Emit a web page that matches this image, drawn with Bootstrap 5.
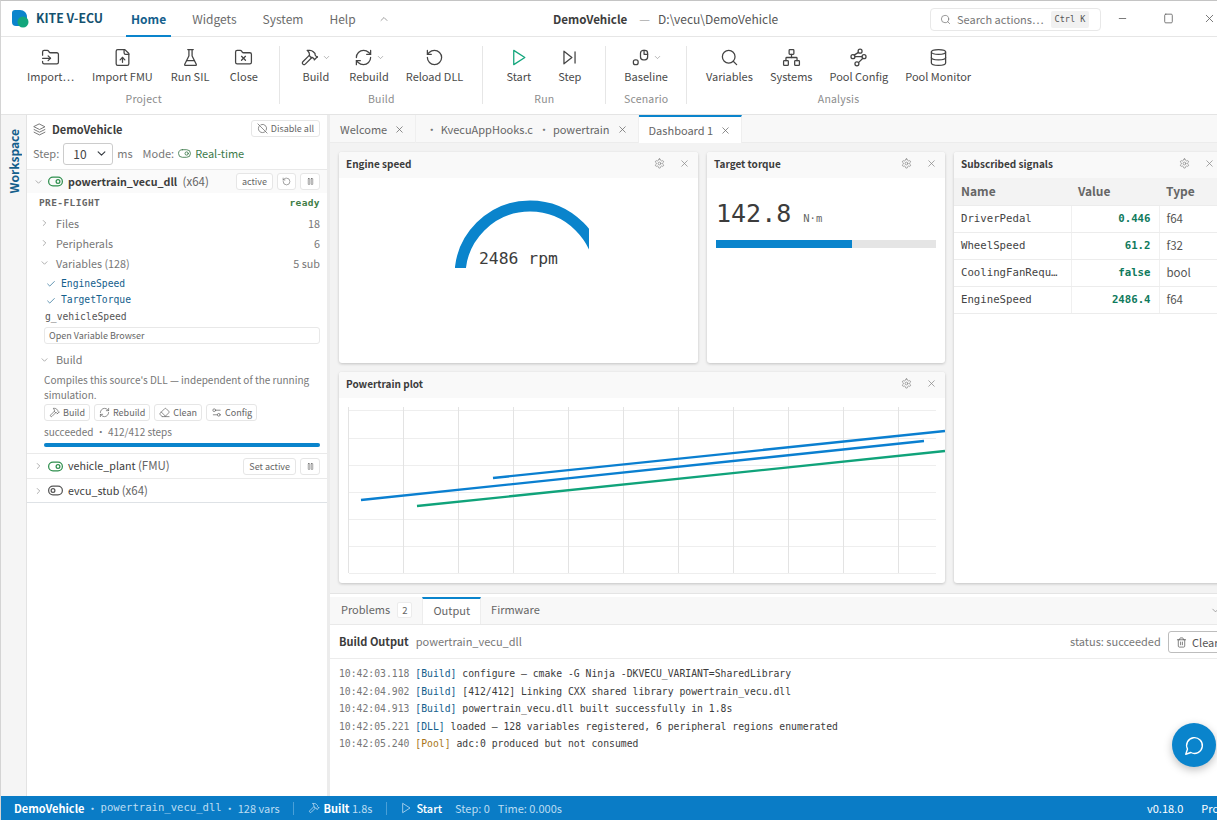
<!DOCTYPE html>
<html lang="en">
<head>
    <meta charset="UTF-8">
    <title>KITE V-ECU</title>
    <link href="https://cdn.jsdelivr.net/npm/bootstrap@5.3.0/dist/css/bootstrap.min.css" rel="stylesheet">
    <style>
        body { margin: 0; height: 820px; overflow: hidden; font-family: "Noto Sans CJK SC", "Noto Sans", sans-serif; font-size: 11px; color: #3c3c3c; background: #fff; }
        .mono { font-family: "DejaVu Sans Mono", monospace; }
        .ico { width: 1em; height: 1em; fill: none; stroke: currentColor; stroke-width: 1.6; stroke-linecap: round; stroke-linejoin: round; flex: none; }

        .app-shell { height: 820px; width: 1217px; border-top: 1px solid #c4c4c4; border-left: 1px solid #d4d4d4; overflow: hidden; }

        .title-row { height: 36px; flex: none; border-bottom: 1px solid #e6e6e6; position: relative; }
        .logo-mark { width: 18px; height: 18px; margin-left: 10px; flex: none; }
        .brand-name { font-size: 12.3px; font-weight: 600; color: #14516f; margin-left: 7px; width: 90px; }
        .menu-tab { font-size: 12px; color: #6b6b6b; padding: 0 5px; margin-right: 16px; height: 36px; line-height: 35px; }
        .menu-tab.on { color: #14608c; font-weight: 600; border-bottom: 2px solid #0a84cc; }
        .win-title { position: absolute; left: 552px; top: 0; line-height: 35px; font-size: 12px; color: #555; }
        .win-title b { color: #3c3c3c; font-weight: 600; font-size: 11.6px; }
        .title-dash { color: #aaa; margin: 0 8px 0 12px; }
        .search-box { position: absolute; left: 929px; top: 7px; width: 171px; height: 23px; border: 1px solid #e8e8e8; border-radius: 4px; font-size: 11px; color: #777; padding-left: 9px; gap: 6px; white-space: nowrap; }
        .kbd-chip { font-size: 8.5px; background: #f1f1f1; border-radius: 2px; padding: 2px 4px; margin-left: 1px; color: #555; }
        .win-btn { position: absolute; top: 11px; font-size: 13px; color: #666; }

        .ribbon-row { height: 78px; flex: none; border-bottom: 1px solid #e4e4e4; padding-left: 19px; }
        .rib-group { display: flex; flex-direction: column; align-items: center; padding-top: 8px; }
        .rib-items { display: flex; gap: 4px; }
        .rib-items.tight { gap: 3px; }
        .rib-item { min-width: 47px; padding: 0 7px; text-align: center; font-size: 11px; color: #4a4a4a; white-space: nowrap; }
        .rib-item.slim { padding: 0 6px; }
        .rib-icon { height: 24px; margin-bottom: -1px; display: flex; align-items: center; justify-content: center; gap: 3px; font-size: 19px; color: #444; }
        .rib-icon .caret-small { font-size: 9px; color: #888; }
        .rib-cap { font-size: 10.5px; color: #8c8c8c; margin-top: 6px; letter-spacing: .2px; }
        .rib-sep { width: 1px; height: 58px; background: #e6e6e6; margin: 9px 12px 0; }

        .work-row { flex: 1; min-height: 0; }
        .side-rail { width: 26px; flex: none; background: #f5f5f5; border-right: 1px solid #e3e3e3; }
        .rail-label { writing-mode: vertical-rl; transform: rotate(180deg); font-size: 12px; font-weight: 600; color: #14608c; margin: 14px 0 0 4px; }

        .side-pane { width: 300px; flex: none; overflow: hidden; border-right: 3px solid #ececec; box-sizing: content-box; }
        .pane-head { height: 28px; padding: 5px 7px 0 6px; }
        .pane-name { font-size: 11px; font-weight: 600; color: #3c3c3c; margin-left: 6px; line-height: 19px; }
        .mini-btn { font-size: 9px; line-height: 1; color: #666; background: #fff; border: 1px solid #e6e6e6; border-radius: 3px; height: 17px; padding: 0 5px; display: inline-flex; align-items: center; gap: 3px; white-space: nowrap; }
        .step-row { height: 27px; padding-left: 6px; font-size: 11px; color: #777; border-bottom: 1px solid #e9e9e9; padding-bottom: 5px; }
        .step-select { width: 50px; height: 22px; min-height: 22px; font-size: 12px; padding: 0 0 0 9px; margin: 0 4px 0 4px; background-position: right 5px center; background-size: 11px 9px; border-color: #ccc; border-radius: 3px; color: #444; }
        .mode-label { margin-left: 10px; }
        .real-time { color: #3c7a4a; }
        .source-row { height: 23px; padding: 0 7px 0 6px; background: #fafafa; }
        .source-row.plain { background: #fff; height: 25px; border-top: 1px solid #eaeaea; padding-top: 1px; }
        .chev { font-size: 10px; color: #888; width: 11px; margin-right: 4px; }
        .toggle-on { font-size: 15px; color: #2f8f4e; stroke-width: 2; }
        .toggle-off { font-size: 15px; color: #555; stroke-width: 2; }
        .src-name { font-size: 10.7px; color: #3c3c3c; margin-left: 5px; }
        .src-name small { font-size: 11.500px; color: #666; }
        .src-bold { font-weight: 600; margin-right: 3px; }
        .preflight { height: 20px; padding: 0 7px 0 12px; font-size: 9.5px; font-weight: 700; color: #666; letter-spacing: .4px; }
        .preflight .ok-txt { color: #3f7d46; }
        .tree-row { height: 20px; padding: 0 7px 0 12px; color: #777; font-size: 10.8px; }
        .tree-row .chev { margin-right: 6px; }
        .var-list { padding-top: 3px; }
        .var-row { height: 16.5px; padding-left: 19px; font-size: 9.7px; color: #14608c; gap: 5px; }
        .var-row .ico { font-size: 10px; color: #14608c; }
        .var-plain { color: #555; padding-left: 18px; }
        .wide-btn { margin: 1px 7px 0 17px; height: 17px; border: 1px solid #e8e8e8; border-radius: 3px; font-size: 9px; color: #666; padding: 0 4px; line-height: 15px; }
        .build-head { margin-top: 6px; }
        .build-text { padding: 2px 7px 0 17px; font-size: 10px; line-height: 15px; color: #777; }
        .build-btns { padding-left: 17px; gap: 4px; margin-top: 2px; }
        .build-btns .mini-btn { padding: 0 4px; }
        .step-state { padding-left: 17px; height: 20px; font-size: 10px; color: #777; margin-top: 1px; white-space: pre; }
        .build-bar { height: 4px; margin: 1px 7px 6px 17px; background: #e5e5e5; }
        .build-bar .progress-bar { background: #0a84cc; }

        .main-pane { flex: 1; min-width: 0; overflow: hidden; }
        .doc-tabs { height: 28px; flex: none; background: #f8f8f8; border-bottom: 1px solid #ececec; font-size: 11px; color: #666; }
        .doc-tab { height: 28px; padding: 0 10px; gap: 7px; border-right: 1px solid #efefef; white-space: nowrap; }
        .doc-tab.on { background: #fff; border-top: 2px solid #0a84cc; }
        .doc-tab .ico { font-size: 11px; }
        .doc-dot { color: #777; margin: 0 1px 0 3px; }
        .doc-dot.first { margin-left: 0; }

        .dash-area { height: 451px; flex: none; background: #f3f3f3; padding: 9px 0 0 9px; overflow: hidden; border-bottom: 1px solid #e4e4e4; display: grid; grid-template-columns: 359px 238px 269px; grid-template-rows: 211px 211px; gap: 9px; width: 887px; }
        .widget-box { background: #fff; border-radius: 3px; box-shadow: 0 1px 3px rgba(0,0,0,.2); overflow: hidden; }
        .widget-head { height: 26px; background: #f9f9f9; padding: 0 8px 3px 7px; font-size: 10px; font-weight: 600; color: #3c3c3c; gap: 14px; }
        .widget-head .ico { font-size: 11px; color: #888; }
        .gauge-wrap { position: relative; margin: 22px 0 0 116px; width: 134px; height: 68px; }
        .gauge-wrap svg { display: block; }
        .gauge-val { position: absolute; left: 24px; top: 48px; font-size: 16.4px; line-height: 22px; color: #3c3c3c; white-space: nowrap; }
        .torque-val { font-size: 25px; line-height: 30px; color: #3c3c3c; margin: 21px 0 0 9px; }
        .torque-val span { font-size: 10.5px; margin-left: 12px; color: #666; }
        .torque-bar { height: 8px; margin: 7px 9px 0; background: #e5e5e5; border-radius: 0; }
        .torque-bar .progress-bar { background: #0a84cc; }

        .sig-table { width: 269px; table-layout: fixed; margin: 0; font-size: 10.7px; }
        .sig-table th { background: #f3f3f3; height: 27px; font-size: 12px; font-weight: 600; color: #666; padding: 0 7px; border-bottom: 1px solid #ececec; vertical-align: middle; }
        .sig-table td { height: 27px; padding: 1px 7px 0; color: #444; border-bottom: 1px solid #ececec; border-right: 1px solid #f0f0f0; vertical-align: middle; overflow: hidden; white-space: nowrap; }
        .sig-table td.num { text-align: right; font-weight: 700; color: #0f7a5c; padding-right: 8px; }
        .sig-table td.kind { font-size: 11.5px; font-family: "Noto Sans CJK SC", sans-serif; color: #555; border-right: 0; }
        .plot-svg { display: block; }

        .bottom-pane { flex: 1; min-height: 0; position: relative; }
        .bottom-gap { height: 3px; }
        .panel-tabs { height: 28px; flex: none; background: #f8f8f8; border-bottom: 1px solid #e9e9e9; font-size: 11px; color: #666; padding-left: 1px; }
        .panel-tab { height: 27px; padding: 0 10px 2px; gap: 7px; }
        .panel-tab.on { background: #fff; border-top: 2px solid #0a84cc; border-right: 1px solid #ededed; border-left: 1px solid #ededed; padding-bottom: 2px; }
        .count-chip { font-size: 9.5px; background: #fff; border: 1px solid #ececec; border-radius: 2px; padding: 0 4px; line-height: 14px; }
        .panel-head { height: 34px; flex: none; border-bottom: 1px solid #ececec; padding: 0 0 0 9px; font-size: 11px; color: #777; position: relative; }
        .panel-head b { font-weight: 600; color: #3c3c3c; margin-right: 7px; }
        .clear-btn { position: absolute; left: 838px; top: 6px; width: 70px; height: 22px; border: 1px solid #bdbdbd; border-radius: 3px; font-size: 11px; color: #555; padding-left: 7px; gap: 5px; }
        .status-txt { position: absolute; left: 740px; top: 8px; }
        .log-box { padding: 6px 0 0 9px; font-size: 9.75px; line-height: 17.5px; color: #3c3c3c; white-space: pre; }
        .log-time { color: #777; }
        .log-build { color: #14608c; }
        .log-pool { color: #a8761a; }
        .chat-fab { position: absolute; left: 842px; top: 129px; width: 44px; height: 44px; border-radius: 50%; background: #0a84cc; color: #fff; font-size: 21px; box-shadow: 0 3px 8px rgba(0,0,0,.25); }

        .status-bar { height: 24px; flex: none; background: #0a7cc6; color: #bcdcf2; font-size: 11px; padding-left: 13px; position: relative; white-space: nowrap; }
        .status-bar b { color: #fff; font-weight: 600; }
        .status-dot { margin: 0 2.5px; }
        .status-sep { width: 1px; height: 13px; background: #4aa0d8; margin: 0 13.5px; }
        .status-step { margin-left: 13px; }
        .status-right { position: absolute; left: 1146px; top: 4px; color: #fff; gap: 18px; }
    </style>
</head>
<body>

<svg width="0" height="0" class="position-absolute">
    <symbol id="i-folder-in" viewBox="0 0 24 24"><path d="M2 9V5a2 2 0 0 1 2-2h3.9a2 2 0 0 1 1.69.9l.81 1.2a2 2 0 0 0 1.67.9H20a2 2 0 0 1 2 2v10a2 2 0 0 1-2 2H4a2 2 0 0 1-2-2v-1"/><path d="M2 13h10"/><path d="m9 16 3-3-3-3"/></symbol>
    <symbol id="i-file-up" viewBox="0 0 24 24"><path d="M15 2H6a2 2 0 0 0-2 2v16a2 2 0 0 0 2 2h12a2 2 0 0 0 2-2V7Z"/><path d="M14 2v4a2 2 0 0 0 2 2h4"/><path d="M12 12v6"/><path d="m15 15-3-3-3 3"/></symbol>
    <symbol id="i-flask" viewBox="0 0 24 24"><path d="M10 2v7.527a2 2 0 0 1-.211.896L4.72 20.55a1 1 0 0 0 .9 1.45h12.76a1 1 0 0 0 .9-1.45l-5.069-10.127A2 2 0 0 1 14 9.527V2"/><path d="M8.5 2h7"/><path d="M7 16h10"/></symbol>
    <symbol id="i-folder-x" viewBox="0 0 24 24"><path d="M20 20a2 2 0 0 0 2-2V8a2 2 0 0 0-2-2h-7.9a2 2 0 0 1-1.69-.9L9.6 3.9A2 2 0 0 0 7.93 3H4a2 2 0 0 0-2 2v13a2 2 0 0 0 2 2Z"/><path d="m9.5 10.5 5 5"/><path d="m14.5 10.5-5 5"/></symbol>
    <symbol id="i-hammer" viewBox="0 0 24 24"><path d="m15 12-8.373 8.373a1 1 0 1 1-3-3L12 9"/><path d="m18 15 4-4"/><path d="m21.5 11.5-1.914-1.914A2 2 0 0 1 19 8.172V7l-2.26-2.26a6 6 0 0 0-4.202-1.756L9 2.96l.92.82A6.18 6.18 0 0 1 12 8.4V10l2 2h1.172a2 2 0 0 1 1.414.586L18.5 14.5"/></symbol>
    <symbol id="i-refresh" viewBox="0 0 24 24"><path d="M3 12a9 9 0 0 1 9-9 9.75 9.75 0 0 1 6.74 2.74L21 8"/><path d="M21 3v5h-5"/><path d="M21 12a9 9 0 0 1-9 9 9.75 9.75 0 0 1-6.74-2.74L3 16"/><path d="M8 16H3v5"/></symbol>
    <symbol id="i-rotate" viewBox="0 0 24 24"><path d="M3 12a9 9 0 1 0 9-9 9.75 9.75 0 0 0-6.74 2.74L3 8"/><path d="M3 3v5h5"/></symbol>
    <symbol id="i-play" viewBox="0 0 24 24"><path d="M6 3l14 9-14 9z"/></symbol>
    <symbol id="i-step" viewBox="0 0 24 24"><path d="M5 4l10 8-10 8z"/><path d="M19 5v14"/></symbol>
    <symbol id="i-baseline" viewBox="0 0 24 24"><rect x="3" y="15" width="6" height="6" rx="2.5"/><rect x="12" y="3" width="9" height="12" rx="3.5"/><path d="M16.5 3v5h4.5"/></symbol>
    <symbol id="i-search" viewBox="0 0 24 24"><circle cx="11" cy="11" r="8"/><path d="m21 21-4.3-4.3"/></symbol>
    <symbol id="i-network" viewBox="0 0 24 24"><rect x="16" y="16" width="6" height="6" rx="1"/><rect x="2" y="16" width="6" height="6" rx="1"/><rect x="9" y="2" width="6" height="6" rx="1"/><path d="M5 16v-3a1 1 0 0 1 1-1h12a1 1 0 0 1 1 1v3"/><path d="M12 12V8"/></symbol>
    <symbol id="i-pool" viewBox="0 0 24 24"><circle cx="14" cy="4" r="2.5"/><circle cx="5" cy="11" r="2.5"/><circle cx="19" cy="11" r="2.5"/><circle cx="10" cy="20" r="2.5"/><path d="M12 5.5 6.500 9M7.500 11h9M17.500 13l-5.500 5.500"/></symbol>
    <symbol id="i-db" viewBox="0 0 24 24"><ellipse cx="12" cy="5" rx="9" ry="3"/><path d="M3 5V19A9 3 0 0 0 21 19V5"/><path d="M3 12A9 3 0 0 0 21 12"/></symbol>
    <symbol id="i-layers" viewBox="0 0 24 24"><path d="m12 2 10 5-10 5L2 7z"/><path d="m2 12 10 5 10-5"/><path d="m2 17 10 5 10-5"/></symbol>
    <symbol id="i-on" viewBox="0 0 24 24"><rect x="1" y="5" width="22" height="14" rx="7"/><circle cx="16" cy="12" r="3"/></symbol>
    <symbol id="i-off" viewBox="0 0 24 24"><rect x="1" y="5" width="22" height="14" rx="7"/><circle cx="8" cy="12" r="3"/></symbol>
    <symbol id="i-noslash" viewBox="0 0 24 24"><path d="M8.500 3.700A9 9 0 0 1 20.300 15.500"/><path d="M5.600 5.600A9 9 0 0 0 18.400 18.400"/><path d="m2 2 20 20"/></symbol>
    <symbol id="i-pause" viewBox="0 0 24 24"><rect x="6" y="4" width="4" height="16" rx="1"/><rect x="14" y="4" width="4" height="16" rx="1"/></symbol>
    <symbol id="i-eraser" viewBox="0 0 24 24"><path d="m7 21-4.300-4.300c-1-1-1-2.500 0-3.400l9.600-9.600c1-1 2.500-1 3.400 0l5.600 5.600c1 1 1 2.500 0 3.400L13 21"/><path d="M22 21H7"/><path d="m5 11 9 9"/></symbol>
    <symbol id="i-sliders" viewBox="0 0 24 24"><path d="M20 7h-9"/><path d="M14 17H5"/><circle cx="17" cy="17" r="3"/><circle cx="7" cy="7" r="3"/></symbol>
    <symbol id="i-gear" viewBox="0 0 24 24"><path d="M12.220 2h-.44a2 2 0 0 0-2 2v.18a2 2 0 0 1-1 1.730l-.43.25a2 2 0 0 1-2 0l-.15-.08a2 2 0 0 0-2.730.73l-.22.38a2 2 0 0 0 .73 2.730l.15.1a2 2 0 0 1 1 1.720v.51a2 2 0 0 1-1 1.740l-.15.09a2 2 0 0 0-.73 2.730l.22.38a2 2 0 0 0 2.730.73l.15-.08a2 2 0 0 1 2 0l.43.25a2 2 0 0 1 1 1.730V20a2 2 0 0 0 2 2h.44a2 2 0 0 0 2-2v-.18a2 2 0 0 1 1-1.730l.43-.25a2 2 0 0 1 2 0l.15.08a2 2 0 0 0 2.730-.73l.22-.39a2 2 0 0 0-.73-2.730l-.15-.08a2 2 0 0 1-1-1.740v-.5a2 2 0 0 1 1-1.740l.15-.09a2 2 0 0 0 .73-2.730l-.22-.38a2 2 0 0 0-2.730-.73l-.15.08a2 2 0 0 1-2 0l-.43-.25a2 2 0 0 1-1-1.730V4a2 2 0 0 0-2-2z"/><circle cx="12" cy="12" r="3"/></symbol>
    <symbol id="i-x" viewBox="0 0 24 24"><path d="M18 6 6 18"/><path d="m6 6 12 12"/></symbol>
    <symbol id="i-right" viewBox="0 0 24 24"><path d="m9 18 6-6-6-6"/></symbol>
    <symbol id="i-down" viewBox="0 0 24 24"><path d="m6 9 6 6 6-6"/></symbol>
    <symbol id="i-up" viewBox="0 0 24 24"><path d="m18 15-6-6-6 6"/></symbol>
    <symbol id="i-check" viewBox="0 0 24 24"><path d="M20 6 9 17l-5-5"/></symbol>
    <symbol id="i-trash" viewBox="0 0 24 24"><path d="M3 6h18"/><path d="M19 6v14c0 1-1 2-2 2H7c-1 0-2-1-2-2V6"/><path d="M8 6V4c0-1 1-2 2-2h4c1 0 2 1 2 2v2"/><path d="M10 11v6"/><path d="M14 11v6"/></symbol>
    <symbol id="i-chat" viewBox="0 0 24 24"><path d="M7.900 20A9 9 0 1 0 4 16.100L2 22Z"/></symbol>
</svg>

<div class="app-shell d-flex flex-column">

    <!-- Title bar -->
    <div class="title-row d-flex align-items-center">
        <svg class="logo-mark" viewBox="0 0 18 18"><path d="M1 3a3 3 0 0 1 3-3h5c4 0 7 3 7 7v4a5 5 0 0 1-5 5H5a4 4 0 0 1-4-4z" fill="#0a84cc"/><circle cx="12" cy="12" r="5.500" fill="#12a67c"/></svg>
        <div class="brand-name">KITE V-ECU</div>
        <div class="menu-tab on">Home</div>
        <div class="menu-tab">Widgets</div>
        <div class="menu-tab">System</div>
        <div class="menu-tab">Help</div>
        <svg class="ico" style="font-size:12px;color:#888;margin-left:1px"><use href="#i-up"/></svg>
        <div class="win-title"><b>DemoVehicle</b><span class="title-dash">—</span>D:\vecu\DemoVehicle</div>
        <div class="search-box d-flex align-items-center">
            <svg class="ico"><use href="#i-search"/></svg>
            <span>Search actions⋯</span>
            <span class="kbd-chip mono">Ctrl K</span>
        </div>
        <svg class="ico win-btn" style="left:1115px" viewBox="0 0 24 24"><path d="M6 12h12"/></svg>
        <svg class="ico win-btn" style="left:1161px" viewBox="0 0 24 24"><rect x="5" y="4" width="14" height="16" rx="2"/></svg>
        <svg class="ico win-btn" style="left:1202px"><use href="#i-x"/></svg>
    </div>

    <!-- Ribbon -->
    <div class="ribbon-row d-flex">
        <div class="rib-group">
            <div class="rib-items">
                <div class="rib-item"><div class="rib-icon"><svg class="ico"><use href="#i-folder-in"/></svg></div>Import⋯</div>
                <div class="rib-item"><div class="rib-icon"><svg class="ico"><use href="#i-file-up"/></svg></div>Import FMU</div>
                <div class="rib-item"><div class="rib-icon"><svg class="ico"><use href="#i-flask"/></svg></div>Run SIL</div>
                <div class="rib-item"><div class="rib-icon"><svg class="ico"><use href="#i-folder-x"/></svg></div>Close</div>
            </div>
            <div class="rib-cap">Project</div>
        </div>
        <div class="rib-sep"></div>
        <div class="rib-group">
            <div class="rib-items tight">
                <div class="rib-item"><div class="rib-icon"><svg class="ico"><use href="#i-hammer"/></svg><svg class="ico caret-small"><use href="#i-down"/></svg></div>Build</div>
                <div class="rib-item"><div class="rib-icon"><svg class="ico"><use href="#i-refresh"/></svg><svg class="ico caret-small"><use href="#i-down"/></svg></div>Rebuild</div>
                <div class="rib-item"><div class="rib-icon"><svg class="ico"><use href="#i-rotate"/></svg></div>Reload DLL</div>
            </div>
            <div class="rib-cap">Build</div>
        </div>
        <div class="rib-sep"></div>
        <div class="rib-group">
            <div class="rib-items">
                <div class="rib-item"><div class="rib-icon" style="color:#12a67c"><svg class="ico"><use href="#i-play"/></svg></div>Start</div>
                <div class="rib-item"><div class="rib-icon"><svg class="ico"><use href="#i-step"/></svg></div>Step</div>
            </div>
            <div class="rib-cap">Run</div>
        </div>
        <div class="rib-sep"></div>
        <div class="rib-group">
            <div class="rib-items">
                <div class="rib-item slim"><div class="rib-icon"><svg class="ico"><use href="#i-baseline"/></svg><svg class="ico caret-small"><use href="#i-down"/></svg></div>Baseline</div>
            </div>
            <div class="rib-cap">Scenario</div>
        </div>
        <div class="rib-sep"></div>
        <div class="rib-group">
            <div class="rib-items tight">
                <div class="rib-item"><div class="rib-icon"><svg class="ico"><use href="#i-search"/></svg></div>Variables</div>
                <div class="rib-item"><div class="rib-icon"><svg class="ico"><use href="#i-network"/></svg></div>Systems</div>
                <div class="rib-item"><div class="rib-icon"><svg class="ico"><use href="#i-pool"/></svg></div>Pool Config</div>
                <div class="rib-item"><div class="rib-icon"><svg class="ico"><use href="#i-db"/></svg></div>Pool Monitor</div>
            </div>
            <div class="rib-cap">Analysis</div>
        </div>
    </div>

    <div class="work-row d-flex">
        <div class="side-rail"><div class="rail-label">Workspace</div></div>

        <!-- Workspace -->
        <div class="side-pane">
            <div class="pane-head d-flex align-items-start">
                <svg class="ico" style="font-size:13px;color:#666;margin-top:3px"><use href="#i-layers"/></svg>
                <span class="pane-name">DemoVehicle</span>
                <span class="mini-btn ms-auto"><svg class="ico" style="font-size:11px"><use href="#i-noslash"/></svg>Disable all</span>
            </div>
            <div class="step-row d-flex align-items-center">
                Step:
                <select class="form-select step-select"><option>10</option></select>
                ms
                <span class="mode-label">Mode:</span>
                <svg class="ico real-time ms-1" style="font-size:13px"><use href="#i-on"/></svg>
                <span class="real-time ms-1">Real-time</span>
            </div>

            <div class="source-row d-flex align-items-center">
                <svg class="ico chev"><use href="#i-down"/></svg>
                <svg class="ico toggle-on"><use href="#i-on"/></svg>
                <span class="src-name"><span class="src-bold">powertrain_vecu_dll</span> <small>(x64)</small></span>
                <span class="mini-btn ms-auto">active</span>
                <span class="mini-btn ms-1" style="width:19px;justify-content:center"><svg class="ico"><use href="#i-rotate"/></svg></span>
                <span class="mini-btn ms-1" style="width:20px;justify-content:center"><svg class="ico"><use href="#i-pause"/></svg></span>
            </div>
            <div class="preflight d-flex align-items-center justify-content-between mono"><span>PRE-FLIGHT</span><span class="ok-txt">ready</span></div>
            <div class="tree-row d-flex align-items-center"><svg class="ico chev"><use href="#i-right"/></svg>Files<span class="ms-auto">18</span></div>
            <div class="tree-row d-flex align-items-center"><svg class="ico chev"><use href="#i-right"/></svg>Peripherals<span class="ms-auto">6</span></div>
            <div class="tree-row d-flex align-items-center"><svg class="ico chev"><use href="#i-down"/></svg>Variables (128)<span class="ms-auto">5 sub</span></div>
            <div class="var-list">
                <div class="var-row d-flex align-items-center mono"><svg class="ico"><use href="#i-check"/></svg>EngineSpeed</div>
                <div class="var-row d-flex align-items-center mono"><svg class="ico"><use href="#i-check"/></svg>TargetTorque</div>
                <div class="var-row var-plain d-flex align-items-center mono">g_vehicleSpeed</div>
            </div>
            <div class="wide-btn">Open Variable Browser</div>
            <div class="tree-row build-head d-flex align-items-center"><svg class="ico chev"><use href="#i-down"/></svg>Build</div>
            <div class="build-text">Compiles this source's DLL — independent of the running simulation.</div>
            <div class="build-btns d-flex">
                <span class="mini-btn"><svg class="ico" style="font-size:11px"><use href="#i-hammer"/></svg>Build</span>
                <span class="mini-btn"><svg class="ico" style="font-size:11px"><use href="#i-refresh"/></svg>Rebuild</span>
                <span class="mini-btn"><svg class="ico" style="font-size:11px"><use href="#i-eraser"/></svg>Clean</span>
                <span class="mini-btn"><svg class="ico" style="font-size:11px"><use href="#i-sliders"/></svg>Config</span>
            </div>
            <div class="step-state d-flex align-items-center">succeeded · 412/412 steps</div>
            <div class="progress build-bar"><div class="progress-bar" style="width:100%"></div></div>

            <div class="source-row plain d-flex align-items-center">
                <svg class="ico chev"><use href="#i-right"/></svg>
                <svg class="ico toggle-on"><use href="#i-on"/></svg>
                <span class="src-name">vehicle_plant <small>(FMU)</small></span>
                <span class="mini-btn ms-auto">Set active</span>
                <span class="mini-btn ms-1" style="width:20px;justify-content:center"><svg class="ico"><use href="#i-pause"/></svg></span>
            </div>
            <div class="source-row plain d-flex align-items-center border-bottom">
                <svg class="ico chev"><use href="#i-right"/></svg>
                <svg class="ico toggle-off"><use href="#i-off"/></svg>
                <span class="src-name">evcu_stub <small>(x64)</small></span>
            </div>
        </div>

        <!-- Main area -->
        <div class="main-pane d-flex flex-column">
            <div class="doc-tabs d-flex">
                <div class="doc-tab d-flex align-items-center">Welcome <svg class="ico"><use href="#i-x"/></svg></div>
                <div class="doc-tab d-flex align-items-center"><span><span class="doc-dot first">·</span> KvecuAppHooks.c <span class="doc-dot">·</span> powertrain</span> <svg class="ico"><use href="#i-x"/></svg></div>
                <div class="doc-tab on d-flex align-items-center">Dashboard 1 <svg class="ico"><use href="#i-x"/></svg></div>
            </div>

            <div class="dash-area">
                <div class="widget-box">
                    <div class="widget-head d-flex align-items-center"><span class="me-auto">Engine speed</span><svg class="ico"><use href="#i-gear"/></svg><svg class="ico"><use href="#i-x"/></svg></div>
                    <div class="gauge-wrap">
                        <svg width="134" height="68" viewBox="0 0 134 68"><path d="M5 76A70 70 0 0 1 145 76" fill="none" stroke="#0a84cc" stroke-width="11"/></svg>
                        <div class="gauge-val mono">2486 rpm</div>
                    </div>
                </div>
                <div class="widget-box">
                    <div class="widget-head d-flex align-items-center"><span class="me-auto">Target torque</span><svg class="ico"><use href="#i-gear"/></svg><svg class="ico"><use href="#i-x"/></svg></div>
                    <div class="torque-val mono">142.8<span>N·m</span></div>
                    <div class="progress torque-bar"><div class="progress-bar" style="width:62%"></div></div>
                </div>
                <div class="widget-box" style="grid-row: span 2; grid-column: 3">
                    <div class="widget-head d-flex align-items-center"><span class="me-auto">Subscribed signals</span><svg class="ico"><use href="#i-gear"/></svg><svg class="ico"><use href="#i-x"/></svg></div>
                    <table class="table sig-table">
                        <colgroup><col style="width:117px"><col style="width:88px"><col style="width:64px"></colgroup>
                        <thead><tr><th>Name</th><th>Value</th><th>Type</th></tr></thead>
                        <tbody class="mono">
                            <tr><td>DriverPedal</td><td class="num">0.446</td><td class="kind">f64</td></tr>
                            <tr><td>WheelSpeed</td><td class="num">61.2</td><td class="kind">f32</td></tr>
                            <tr><td>CoolingFanRequ…</td><td class="num">false</td><td class="kind">bool</td></tr>
                            <tr><td>EngineSpeed</td><td class="num">2486.4</td><td class="kind">f64</td></tr>
                        </tbody>
                    </table>
                </div>
                <div class="widget-box" style="grid-column: span 2">
                    <div class="widget-head d-flex align-items-center"><span class="me-auto">Powertrain plot</span><svg class="ico"><use href="#i-gear"/></svg><svg class="ico"><use href="#i-x"/></svg></div>
                    <svg class="plot-svg" width="606" height="185" viewBox="0 0 606 185">
                        <path d="M10 12.500H597M10 40.500H597M10 67.500H597M10 94.500H597M10 121.500H597M10 148.500H597M10 175.500H597" stroke="#eeeeee" fill="none"/>
                        <path d="M9.500 9V175M64.500 9V175M119.500 9V175M174.500 9V175M229.500 9V175M284.500 9V175M339.500 9V175M394.500 9V175M449.500 9V175M504.500 9V175M559.500 9V175" stroke="#e3e3e3" fill="none"/>
                        <path d="M22 102 585 43" stroke="#0a7fd0" stroke-width="2.300" fill="none"/>
                        <path d="M154 80 606 33" stroke="#0a7fd0" stroke-width="2.300" fill="none"/>
                        <path d="M78 108 606 53" stroke="#10a37a" stroke-width="2.300" fill="none"/>
                    </svg>
                </div>
            </div>

            <!-- Bottom panel -->
            <div class="bottom-pane d-flex flex-column">
                <div class="bottom-gap"></div>
                <div class="panel-tabs d-flex">
                    <div class="panel-tab d-flex align-items-center">Problems <span class="count-chip">2</span></div>
                    <div class="panel-tab on d-flex align-items-center">Output</div>
                    <div class="panel-tab d-flex align-items-center">Firmware</div>
                    <svg class="ico ms-auto align-self-center" style="font-size:11px;color:#888;margin-right:-4px"><use href="#i-down"/></svg>
                </div>
                <div class="panel-head d-flex align-items-center">
                    <b>Build Output</b> powertrain_vecu_dll
                    <span class="status-txt">status: succeeded</span>
                    <span class="clear-btn d-flex align-items-center"><svg class="ico"><use href="#i-trash"/></svg>Clear</span>
                </div>
                <div class="log-box mono"><span class="log-time">10:42:03.118</span> <span class="log-build">[Build]</span> configure — cmake -G Ninja -DKVECU_VARIANT=SharedLibrary
<span class="log-time">10:42:04.902</span> <span class="log-build">[Build]</span> [412/412] Linking CXX shared library powertrain_vecu.dll
<span class="log-time">10:42:04.913</span> <span class="log-build">[Build]</span> powertrain_vecu.dll built successfully in 1.8s
<span class="log-time">10:42:05.221</span> <span class="log-build">[DLL]</span> loaded — 128 variables registered, 6 peripheral regions enumerated
<span class="log-time">10:42:05.240</span> <span class="log-pool">[Pool]</span> adc:0 produced but not consumed</div>
                <div class="chat-fab d-flex align-items-center justify-content-center"><svg class="ico"><use href="#i-chat"/></svg></div>
            </div>
        </div>
    </div>

    <!-- Status bar -->
    <div class="status-bar d-flex align-items-center">
        <b>DemoVehicle</b>
        <span class="status-dot">·</span>
        <span class="mono" style="font-size:10.6px">powertrain_vecu_dll</span>
        <span class="status-dot">·</span>
        <span>128 vars</span>
        <span class="status-sep"></span>
        <svg class="ico me-1" style="font-size:12px"><use href="#i-hammer"/></svg>
        <b>Built</b>&nbsp;1.8s
        <span class="status-sep"></span>
        <svg class="ico me-1" style="font-size:12px"><use href="#i-play"/></svg>
        <b style="font-weight:500">Start</b>
        <span class="status-step">Step: 0</span>
        <span class="ms-2">Time: 0.000s</span>
        <div class="status-right d-flex"><span>v0.18.0</span><span>Pro</span></div>
    </div>
</div>

<script src="https://cdn.jsdelivr.net/npm/bootstrap@5.3.0/dist/js/bootstrap.bundle.min.js"></script>
</body>
</html>
